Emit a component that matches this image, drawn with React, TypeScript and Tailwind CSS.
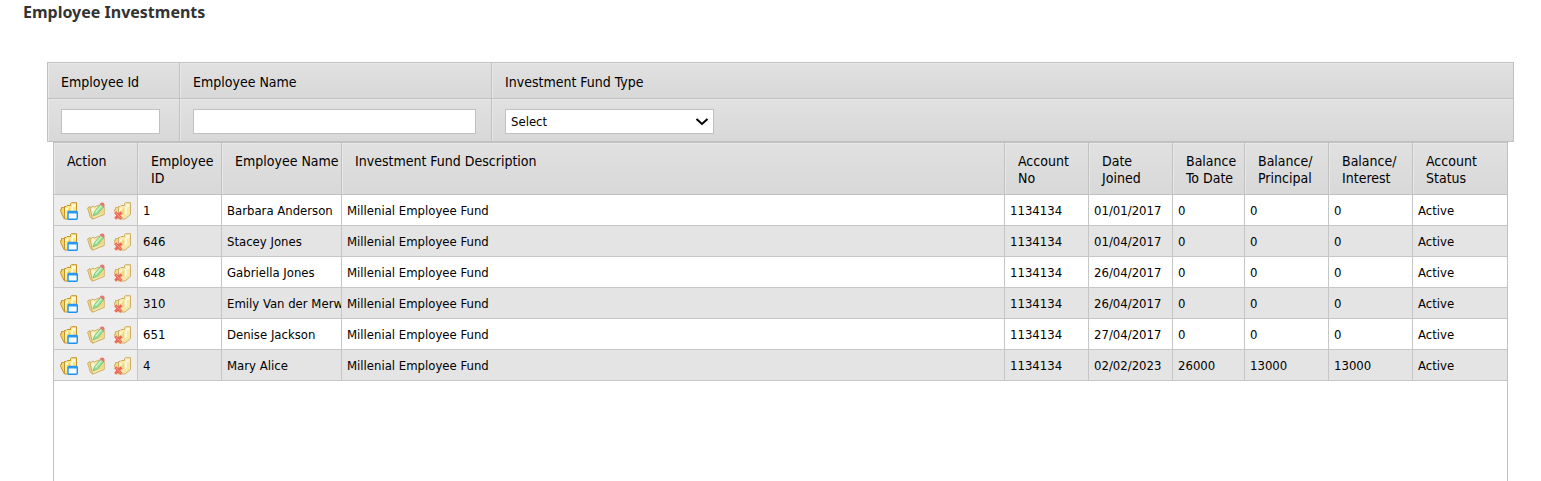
import { useState } from 'react';

type Investment = {
  id: string;
  name: string;
  fund: string;
  account: string;
  joined: string;
  balance: string;
  principal: string;
  interest: string;
  status: string;
};

const FUND = 'Millenial Employee Fund';

const investments: Investment[] = [
  { id: '1', name: 'Barbara Anderson', fund: FUND, account: '1134134', joined: '01/01/2017', balance: '0', principal: '0', interest: '0', status: 'Active' },
  { id: '646', name: 'Stacey Jones', fund: FUND, account: '1134134', joined: '01/04/2017', balance: '0', principal: '0', interest: '0', status: 'Active' },
  { id: '648', name: 'Gabriella Jones', fund: FUND, account: '1134134', joined: '26/04/2017', balance: '0', principal: '0', interest: '0', status: 'Active' },
  { id: '310', name: 'Emily Van der Merwe', fund: FUND, account: '1134134', joined: '26/04/2017', balance: '0', principal: '0', interest: '0', status: 'Active' },
  { id: '651', name: 'Denise Jackson', fund: FUND, account: '1134134', joined: '27/04/2017', balance: '0', principal: '0', interest: '0', status: 'Active' },
  { id: '4', name: 'Mary Alice', fund: FUND, account: '1134134', joined: '02/02/2023', balance: '26000', principal: '13000', interest: '13000', status: 'Active' },
];

const columns = [
  { title: 'Action', width: 'w-[84px]' },
  { title: 'Employee ID', width: 'w-[84px]' },
  { title: 'Employee Name', width: 'w-[120px]' },
  { title: 'Investment Fund Description', width: '' },
  { title: 'Account No', width: 'w-[84px]' },
  { title: 'Date Joined', width: 'w-[84px]' },
  { title: 'Balance To Date', width: 'w-[72px]' },
  { title: 'Balance/ Principal', width: 'w-[84px]' },
  { title: 'Balance/ Interest', width: 'w-[84px]' },
  { title: 'Account Status', width: 'w-[94px]' },
];

const shaded = 'bg-linear-to-b from-[#e1e1e1] to-[#d8d8d8] shadow-[inset_1px_1px_0_#e8e8e8]';
const field = 'block h-[25px] border border-[#c1c1c1] bg-white pl-[5px] text-[13px] text-black';

const Folder = () => (
  <>
    <path d="M3.5 5.5 H1.5 V7.5 H0.7 V9.5 L4 16.5 H5 V5.5 Z" fill="#f3d56a" stroke="#c3922a" />
    <path d="M4.5 16.5 V4.5 H6 L7 3.5 H10.5 V1.5 L11.5 0.7 H16.5 V12.5 L11 17 H4.5 Z" fill="#fbe88c" stroke="#c3922a" />
    <path d="M5.5 6 H8 V8 H6.5 V14 L5.5 15 Z" fill="#fff9cc" />
    <path d="M12 2 H15.5 V5 H13 V11 L11 13 V5 H12 Z" fill="#fffad2" />
    <path d="M7.5 8.5 V13.5 L10 12 V6 Z" fill="#efcf60" />
  </>
);

const ViewIcon = () => (
  <svg viewBox="0 0 18 18" className="size-[18px]" aria-hidden="true">
    <Folder />
    <rect x="8" y="9.5" width="9.3" height="7.8" rx="1" fill="#f4fbff" stroke="#1e90ee" strokeWidth="1.4" />
    <path d="M8 9.5 H17.3 V11.5 H8 Z" fill="#2b9cf5" />
  </svg>
);

const EditIcon = () => (
  <svg viewBox="0 0 18 18" className="size-[18px] opacity-70" aria-hidden="true">
    <path d="M0.6 6 L3 4.5 L6 17 L3.5 15.5 Z" fill="#f3d56a" stroke="#c3922a" />
    <path d="M3 6 L6 4 L7.5 5 L12 3 L17.2 5 V12.5 L12 14.5 L5.5 17.2 Z" fill="#fbe88c" stroke="#c3922a" />
    <path d="M4.5 7 L7 6 L9 9 L6.5 15 Z" fill="#fff9cc" />
    <path d="M9 14 L16 11.5 V7 L12.5 10 Z" fill="#f0d064" />
    <path d="M14 2 L16.8 4.8 L10.5 12 L6 14 L7.5 9.5 Z" fill="#6ade70" stroke="#3da648" strokeWidth="0.8" />
    <path d="M14.4 3.6 L8.5 10.5" stroke="#c9f7c2" strokeWidth="1.2" />
    <path d="M13.4 1 Q17.5 -0.8 17.7 4 L16.4 5 L12.8 2 Z" fill="#e8453f" />
  </svg>
);

const DeleteIcon = () => (
  <svg viewBox="0 0 18 18" className="size-[18px] opacity-70" aria-hidden="true">
    <Folder />
    <path d="M1.2 10.2 L7.5 16.8 M7.5 10.2 L1.2 16.8" stroke="#f0301c" strokeWidth="2.8" fill="none" />
    <path d="M1.8 10.8 L7 16.2" stroke="#ff8a72" strokeWidth="0.8" fill="none" />
  </svg>
);

const Filters = () => {
  const [id, setId] = useState('');
  const [name, setName] = useState('');

  return (
    <form className="grid grid-cols-[132px_312px_1fr] border border-[#c1c1c1] text-sm/[17px]">
      <label htmlFor="employee-id" className={`border-r border-b border-[#c1c1c1] px-[13px] pt-[11px] pb-[7px] ${shaded}`}>
        Employee Id
      </label>
      <label htmlFor="employee-name" className={`border-r border-b border-[#c1c1c1] px-[13px] pt-[11px] pb-[7px] ${shaded}`}>
        Employee Name
      </label>
      <label htmlFor="fund-type" className={`border-b border-[#c1c1c1] px-[13px] pt-[11px] pb-[7px] ${shaded}`}>
        Investment Fund Type
      </label>
      <div className={`border-r border-[#c1c1c1] px-[13px] pt-[10px] pb-[7px] ${shaded}`}>
        <input id="employee-id" className={`w-[99px] ${field}`} value={id} onChange={(e) => setId(e.target.value)} />
      </div>
      <div className={`border-r border-[#c1c1c1] px-[13px] pt-[10px] pb-[7px] ${shaded}`}>
        <input id="employee-name" className={`w-[283px] ${field}`} value={name} onChange={(e) => setName(e.target.value)} />
      </div>
      <div className={`px-[13px] pt-[10px] pb-[7px] ${shaded}`}>
        <div className="relative w-[209px]">
          <select id="fund-type" className={`w-full appearance-none ${field}`} defaultValue="">
            <option value="">Select</option>
            <option value="millenial">{FUND}</option>
          </select>
          <svg viewBox="0 0 14 8" className="pointer-events-none absolute top-[9px] right-[5px] h-2 w-[14px]" aria-hidden="true">
            <path d="M1.5 1 L7 6 L12.5 1" fill="none" stroke="#000" strokeWidth="2" />
          </svg>
        </div>
      </div>
    </form>
  );
};

const Row = ({ item }: { item: Investment }) => {
  const cells = [item.id, item.name, item.fund, item.account, item.joined, item.balance, item.principal, item.interest, item.status];

  return (
    <tr className="h-[31px] even:bg-[#e4e4e4]">
      <td className="border-r border-b border-[#c6c6c6] bg-[#ededed] px-[6px] pt-[2px]">
        <div className="flex gap-[9px]">
          <button type="button" aria-label={`View ${item.name}`}>
            <ViewIcon />
          </button>
          <button type="button" aria-label={`Edit ${item.name}`}>
            <EditIcon />
          </button>
          <button type="button" aria-label={`Delete ${item.name}`}>
            <DeleteIcon />
          </button>
        </div>
      </td>
      {cells.map((cell, i) => (
        <td key={i} className="overflow-hidden border-r border-b border-[#c6c6c6] pt-px pl-[5px] whitespace-nowrap last:border-r-0">
          {cell}
        </td>
      ))}
    </tr>
  );
};

export default function App() {
  return (
    <main className="flex min-h-screen flex-col bg-white pr-[27px] pl-[47px] font-['Tahoma','DejaVu_Sans_Condensed','DejaVu_Sans',sans-serif] text-black">
      <h1 className="-ml-6 pt-[2px] pb-10 font-['Noto_Sans',sans-serif] text-base/5 font-bold text-[#333]">Employee Investments</h1>
      <Filters />
      <section className="mx-[6px] grow border-x border-[#c1c1c1]">
        <table className="w-full table-fixed border-separate border-spacing-0 text-[13px]/4">
          <thead>
            <tr className="h-[53px]">
              {columns.map((column) => (
                <th
                  key={column.title}
                  className={`overflow-hidden border-t border-r border-b border-[#c1c1c1] pt-[10px] pl-[13px] text-left align-top text-sm/[17px] font-normal last:border-r-0 ${column.width} ${shaded}`}
                >
                  {column.title}
                </th>
              ))}
            </tr>
          </thead>
          <tbody>
            {investments.map((item) => (
              <Row key={item.id} item={item} />
            ))}
          </tbody>
        </table>
      </section>
    </main>
  );
}
